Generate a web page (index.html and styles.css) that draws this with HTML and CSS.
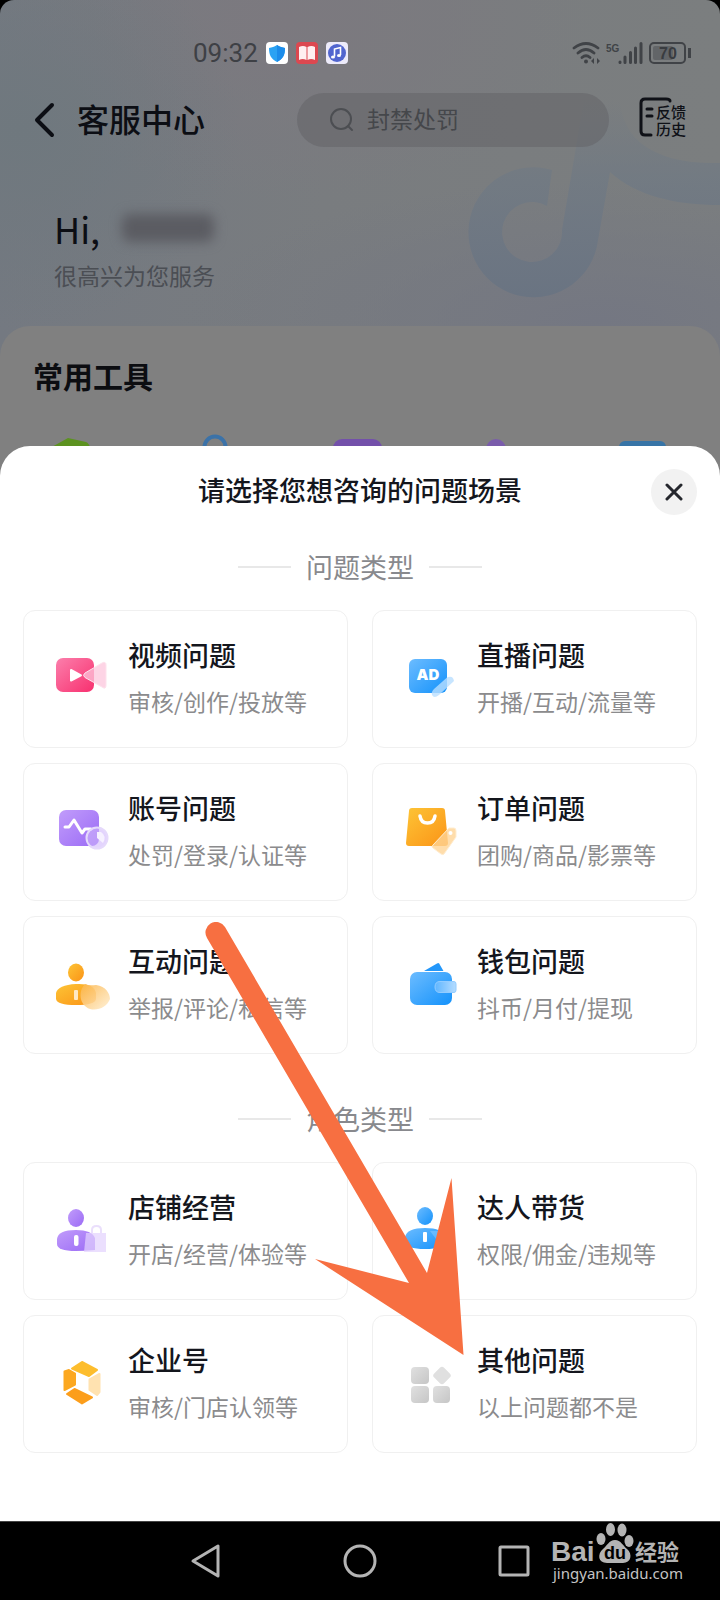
FILE: index.html
```html
<!DOCTYPE html>
<html lang="zh-CN">
<head>
<meta charset="utf-8">
<meta name="viewport" content="width=device-width, initial-scale=1">
<title>客服中心</title>
<link rel="stylesheet" href="styles.css">
</head>
<body>
<svg class="defs" width="0" height="0" aria-hidden="true">
  <defs>
    <linearGradient id="pink" x1="0" y1="0" x2="1" y2="1"><stop offset="0" stop-color="#fb7fac"/><stop offset="1" stop-color="#f8306f"/></linearGradient>
    <linearGradient id="violet" x1="0" y1="0" x2="1" y2="1"><stop offset="0" stop-color="#c19cfb"/><stop offset="1" stop-color="#9b6bf5"/></linearGradient>
    <linearGradient id="blue" x1="0" y1="0" x2="1" y2="1"><stop offset="0" stop-color="#6cbcff"/><stop offset="1" stop-color="#1492fb"/></linearGradient>
    <linearGradient id="amber" x1="0" y1="0" x2="1" y2="1"><stop offset="0" stop-color="#fdc436"/><stop offset="1" stop-color="#fb9316"/></linearGradient>
    <linearGradient id="grey" x1="0" y1="0" x2="1" y2="1"><stop offset="0" stop-color="#e0e0e0"/><stop offset="1" stop-color="#c6c6c6"/></linearGradient>
    <linearGradient id="cream" x1="0" y1="0" x2="1" y2="1"><stop offset="0" stop-color="#fcb548"/><stop offset="1" stop-color="#ffefd2"/></linearGradient>
    <linearGradient id="sky" x1="0" y1="0" x2="1" y2="0"><stop offset="0" stop-color="#5fb6ff"/><stop offset="1" stop-color="#b5dcff"/></linearGradient>
  </defs>
</svg>
<div class="phone">
  <div class="backdrop">
    <svg class="note" viewBox="0 0 264 200" aria-hidden="true">
      <defs><linearGradient id="noteFill" x1="0" y1="0" x2="0" y2="1"><stop offset="0" stop-color="#6f7984" stop-opacity="0"/><stop offset=".4" stop-color="#6f7984" stop-opacity=".7"/><stop offset="1" stop-color="#6a7482"/></linearGradient></defs>
      <path fill="url(#noteFill)" d="M96 70L91 106A30 30 0 1 0 106 130L128 0H164C166 40 200 65 264 63V105C220 105 180 96 154 72L142 140A65 65 0 1 1 96 70Z"/>
    </svg>
    <div class="status">
      <span class="clock">09:32</span>
      <span class="apps" aria-hidden="true">
        <svg width="22" height="22" viewBox="0 0 22 22"><rect width="22" height="22" rx="4" fill="#fff"/><path d="M11 3c3 2 5 2 8 3 0 7-2 11-8 14C5 17 3 13 3 6c3-1 5-1 8-3z" fill="#2ba2f3"/><path d="M11 3c3 2 5 2 8 3 0 7-2 11-8 14z" fill="#1c8cea"/></svg>
        <svg width="22" height="22" viewBox="0 0 22 22"><rect width="22" height="22" rx="4" fill="#dc4850"/><path d="M3 5q4-2 7.500 0v13q-4-2-7.500 0zM11.500 5q4-2 7.500 0v13q-4-2-7.500 0z" fill="#ffeff0"/></svg>
        <svg width="22" height="22" viewBox="0 0 22 22"><rect width="22" height="22" rx="4" fill="#edebfa"/><circle cx="11" cy="11" r="9" fill="#5165cf"/><path d="M8.500 14.500V7l6-1.500V13" fill="none" stroke="#fff" stroke-width="1.600"/><ellipse cx="7" cy="15" rx="2" ry="1.600" fill="#fff"/><ellipse cx="13" cy="13.500" rx="2" ry="1.600" fill="#fff"/></svg>
      </span>
      <svg class="signal" width="120" height="24" viewBox="0 0 120 24" aria-hidden="true">
        <g fill="none" stroke="#404347" stroke-width="2.800" stroke-linecap="round"><path d="M2 7Q14-2 26 7M6 12Q14 5 22 12M10 16.500Q14 13 18 16.500"/></g>
        <circle cx="14" cy="20.500" r="2" fill="#404347"/>
        <path d="M19 20l3-3v6zM28 20l-3-3v6z" fill="#404347"/>
        <text class="net" x="34" y="11">5G</text>
        <g stroke="#404347" stroke-width="3" stroke-linecap="round"><path d="M48 21V21.500M53 16V21.500M58.500 11.500V21.500M63.500 7V21.500M69 2.500V21.500"/></g>
        <rect x="78" y="2" width="35" height="20" rx="4" fill="none" stroke="#404347" stroke-width="2"/>
        <rect x="81" y="5" width="20" height="14" rx="2" fill="#626568"/>
        <path d="M117.500 7V17" stroke="#404347" stroke-width="3"/>
        <text class="level" x="96" y="18" text-anchor="middle">70</text>
      </svg>
    </div>
    <header class="top">
      <button class="back" type="button" aria-label="返回"><svg width="22" height="36" viewBox="0 0 22 36"><path d="M19 3L4 18L19 33" fill="none" stroke="#0c0e14" stroke-width="4" stroke-linecap="round" stroke-linejoin="round"/></svg></button>
      <h1 class="name">客服中心</h1>
      <label class="search">
        <svg width="24" height="24" viewBox="0 0 24 24" aria-hidden="true"><circle cx="11" cy="11" r="10" fill="none" stroke="#4c4e52" stroke-width="2"/><path d="M18 18L22 22" stroke="#4c4e52" stroke-width="2" stroke-linecap="round"/></svg>
        <input type="search" placeholder="封禁处罚" aria-label="搜索">
      </label>
      <button class="history" type="button">
        <svg width="34" height="40" viewBox="0 0 34 40" aria-hidden="true"><path d="M31 4Q31 2 27 2H6Q2 2 2 6V34Q2 38 6 38H12M8 12H13M8 19H13" fill="none" stroke="#0f1117" stroke-width="3" stroke-linecap="round"/></svg>
        <span>反馈<br>历史</span>
      </button>
    </header>
    <section class="greeting">
      <p class="hello">Hi,<span class="masked"></span></p>
      <p class="welcome">很高兴为您服务</p>
    </section>
    <section class="tools">
      <h2>常用工具</h2>
      <div class="tool-icons" aria-hidden="true">
        <svg viewBox="0 0 52 50"><path d="M4 14L22 4L40 8Q46 10 46 30V50H4z" fill="#5c9220"/></svg>
        <svg viewBox="0 0 52 50"><circle cx="26" cy="13" r="10.500" fill="none" stroke="#3b72a8" stroke-width="4"/></svg>
        <svg viewBox="0 0 52 50"><rect x="2" y="5" width="49" height="44" rx="9" fill="#7350aa"/></svg>
        <svg viewBox="0 0 52 50"><circle cx="22" cy="15" r="10" fill="#7a5cab"/></svg>
        <svg viewBox="0 0 52 50"><rect x="3" y="7" width="47" height="40" rx="6" fill="#3774a6"/></svg>
      </div>
    </section>
  </div>

  <main class="sheet">
    <div class="sheet-head">
      <h2>请选择您想咨询的问题场景</h2>
      <button class="close" type="button" aria-label="关闭"><svg width="18" height="18" viewBox="0 0 18 18"><path d="M2 2L16 16M16 2L2 16" stroke="#25272d" stroke-width="3" stroke-linecap="round"/></svg></button>
    </div>

    <h3 class="group">问题类型</h3>
    <div class="cards">
      <button class="card" type="button">
        <svg viewBox="0 0 56 56"><rect x="2" y="11" width="38" height="34" rx="7" fill="url(#pink)"/><path d="M17 23V33.500L27 28.300z" fill="#fff" stroke="#fff" stroke-width="2" stroke-linejoin="round"/><path d="M31 26L48 16Q52 14 52 18V38Q52 43 48 40L31 30.500Q28 28.300 31 26z" fill="#fcc6dc" fill-opacity=".75" stroke="#fde2ec"/></svg>
        <span class="copy"><b>视频问题</b><small>审核/创作/投放等</small></span>
      </button>
      <button class="card" type="button">
        <svg viewBox="0 0 56 56"><rect x="6" y="12" width="38" height="34" rx="6" fill="url(#blue)"/><text class="ad" x="25" y="33" text-anchor="middle">AD</text><path d="M29 48Q28 45 31 42L44 30.500Q50 28 51 34L36 48Q31 52 29 48z" fill="#b9deff" fill-opacity=".8"/></svg>
        <span class="copy"><b>直播问题</b><small>开播/互动/流量等</small></span>
      </button>
      <button class="card" type="button">
        <svg viewBox="0 0 56 56"><rect x="5" y="10" width="40" height="36" rx="7" fill="url(#violet)"/><path d="M11 27H15L20 20L28 33L31 29H37" fill="none" stroke="#fff" stroke-width="3" stroke-linecap="round" stroke-linejoin="round"/><circle cx="43" cy="38" r="10.500" fill="#d0b8fb" fill-opacity=".6" stroke="#e5d9fb" stroke-width="2"/><path d="M43 32V38L49 43Q53 36 47 32z" fill="#f6f1ff"/></svg>
        <span class="copy"><b>账号问题</b><small>处罚/登录/认证等</small></span>
      </button>
      <button class="card" type="button">
        <svg viewBox="0 0 56 56"><path d="M9 8H39Q42 8 42 11L45 43Q45 46 42 46H6Q3 46 3 43L6 11Q6 8 9 8z" fill="url(#amber)"/><path d="M17 16Q18 23 24.500 23T32 16" fill="none" stroke="#fff" stroke-width="3.500" stroke-linecap="round"/><path d="M46 28L51 28Q53 28 53 31V37L41 54Q40 55 38 54L30 48Q28 47 30 45z" fill="#ffd596" fill-opacity=".8" stroke="#ffedd0"/><circle cx="47.500" cy="33" r="2" fill="#fff"/></svg>
        <span class="copy"><b>订单问题</b><small>团购/商品/影票等</small></span>
      </button>
      <button class="card" type="button">
        <svg viewBox="0 0 56 56"><ellipse cx="22" cy="19.500" rx="8" ry="9" fill="url(#amber)"/><path d="M2 46V40Q4 32 22 31T42 40V46Q41 52 22 52T2 46z" fill="url(#amber)"/><rect x="20" y="37" width="4" height="10" rx="1" fill="#ffe8c4"/><path d="M31 31Q35 33 42 32C52 33 56 41 56 46C53 54 44 58 36 56C25 52 24 38 31 31z" fill="url(#cream)" fill-opacity=".88"/></svg>
        <span class="copy"><b>互动问题</b><small>举报/评论/私信等</small></span>
      </button>
      <button class="card" type="button">
        <svg viewBox="0 0 56 56"><path d="M21 18L34 10.500Q36 9 37 12L40.500 18z" fill="#2397fa"/><rect x="7" y="19" width="42" height="33" rx="7" fill="url(#blue)"/><path d="M51 28.500H37Q32 28.500 32 34T37 39.500H51Q53 39.500 53 37V31Q53 28.500 51 28.500z" fill="url(#sky)" stroke="#93ccff"/></svg>
        <span class="copy"><b>钱包问题</b><small>抖币/月付/提现</small></span>
      </button>
    </div>

    <h3 class="group group-next">角色类型</h3>
    <div class="cards">
      <button class="card" type="button">
        <svg viewBox="0 0 56 56"><ellipse cx="22" cy="19" rx="8" ry="9" fill="url(#violet)"/><path d="M3 45V40Q4 31 22 31Q38 31 41 39V51Q30 52 22 52Q3 52 3 45z" fill="url(#violet)"/><rect x="20" y="36" width="4.500" height="11" rx="2" fill="#fff"/><path d="M38 34V31Q38 27 42.500 27T47 31V34" fill="none" stroke="#eadffc" stroke-width="2"/><path d="M32 34H52V53H30z" fill="#e3d3fd" fill-opacity=".72"/></svg>
        <span class="copy"><b>店铺经营</b><small>开店/经营/体验等</small></span>
      </button>
      <button class="card" type="button">
        <svg viewBox="0 0 56 56"><ellipse cx="22" cy="17" rx="8" ry="9" fill="url(#blue)"/><path d="M2 43V38Q4 29 22 29T42 38V43Q41 50 22 50T2 43z" fill="url(#blue)"/><rect x="20" y="33" width="4" height="10" rx="1" fill="#fff"/><path d="M27 32H45V44H36Z" fill="#8ecbff" fill-opacity=".5"/></svg>
        <span class="copy"><b>达人带货</b><small>权限/佣金/违规等</small></span>
      </button>
      <button class="card" type="button">
        <svg viewBox="0 0 56 56"><g stroke-width="2" stroke-linejoin="round"><path d="M18 16.500L28 10L43 18L35 24z" fill="#fdbd2d" stroke="#fdbd2d"/><path d="M10.500 19.500L15 18L21 21.500V32.500L10.500 38z" fill="#fca820" stroke="#fca820"/><path d="M13 42L20.500 37L38 45.500L28 51.500z" fill="#fc9e1b" stroke="#fc9e1b"/><path d="M35.500 27.500L45.500 22V40L43 43L35.500 38z" fill="#ffe2b0" stroke="#ffe2b0"/></g></svg>
        <span class="copy"><b>企业号</b><small>审核/门店认领等</small></span>
      </button>
      <button class="card" type="button">
        <svg viewBox="0 0 56 56"><rect x="8" y="15" width="18" height="17" rx="4" fill="url(#grey)"/><rect x="8" y="34" width="18" height="17" rx="4" fill="url(#grey)"/><rect x="30" y="34" width="17" height="17" rx="4" fill="url(#grey)"/><rect x="32" y="16.500" width="14" height="14" rx="3" fill="#e0e0e0" transform="rotate(45 39 23.500)"/></svg>
        <span class="copy"><b>其他问题</b><small>以上问题都不是</small></span>
      </button>
    </div>
    <svg class="pointer" width="260" height="434" viewBox="0 0 260 434" aria-hidden="true"><path d="M20 5L222 351L246.500 256L258.500 433L110 337L204 361L2 16A10.300 10.300 0 0 1 20 5z" fill="#f76f41"/></svg>
  </main>

  <nav class="keys" aria-label="系统导航">
    <button type="button" aria-label="返回"><svg width="34" height="36" viewBox="0 0 34 36"><path d="M4 18L29 3V33z" fill="none" stroke="#b4b4b4" stroke-width="3" stroke-linejoin="round"/></svg></button>
    <button type="button" aria-label="主页"><svg width="34" height="36" viewBox="0 0 34 36"><circle cx="17" cy="18" r="15" fill="none" stroke="#b4b4b4" stroke-width="3"/></svg></button>
    <button type="button" aria-label="最近任务"><svg width="34" height="36" viewBox="0 0 34 36"><rect x="3" y="4" width="28" height="28" rx="1" fill="none" stroke="#b4b4b4" stroke-width="3"/></svg></button>
    <div class="mark">
      <svg width="128" height="42" viewBox="0 0 128 42" role="img" aria-label="Bai du 经验">
        <text class="mark-latin" x="-2" y="38">Bai</text>
        <g fill="#b4b4b4"><ellipse cx="48" cy="16" rx="4.500" ry="6"/><ellipse cx="57.500" cy="6.500" rx="4.500" ry="6.500"/><ellipse cx="69" cy="7" rx="4.500" ry="6.500"/><ellipse cx="76" cy="18" rx="4.500" ry="6"/><path d="M62 17C68 17 70 23 74 26C80 31 78 40 70 40H54C45 40 44 31 50 26C54 23 56 17 62 17z"/></g>
        <text class="mark-du" x="62" y="36" text-anchor="middle">du</text>
        <text class="mark-han" x="82" y="37">经验</text>
      </svg>
      <span class="mark-url">jingyan.baidu.com</span>
    </div>
  </nav>
</div>
</body>
</html>
```
FILE: styles.css
```css
* { box-sizing: border-box; }

body {
  margin: 0;
  background: #000;
  font-family: "Noto Sans CJK SC", "Noto Sans", sans-serif;
  color: #14161d;
}

h1, h2, h3, p { margin: 0; }

button {
  margin: 0;
  padding: 0;
  border: 0;
  background: none;
  font: inherit;
  color: inherit;
  text-align: left;
}

svg { display: block; flex: none; }
.defs { position: absolute; }

.phone {
  min-height: 100vh;
  display: flex;
  flex-direction: column;
}

/* Dimmed page behind the sheet */
.backdrop {
  position: relative;
  padding-top: 40px;
  border-radius: 14px 14px 0 0;
  background:
    radial-gradient(ellipse 220px 200px at 20px 130px, #6f787e, transparent),
    radial-gradient(ellipse 300px 180px at 290px 20px, #7c797f, transparent),
    radial-gradient(ellipse 420px 140px at 600px 320px, #747782, transparent),
    linear-gradient(90deg, #747981, #797c7f 45%, #7b7e7f);
}

.note {
  position: absolute;
  top: 100px;
  right: 0;
  width: 264px;
}

.status, .top, .greeting, .tools { position: relative; }

.status {
  display: flex;
  align-items: center;
  height: 26px;
  padding: 0 28px 0 193px;
}

.clock {
  font: 400 26px/26px Roboto, sans-serif;
  color: #3e4045;
}

.apps { display: flex; gap: 8px; margin-left: 8px; }
.signal { margin-left: auto; }
.net { font: bold 10px "Liberation Sans", sans-serif; fill: #404347; }
.level { font: bold 16px "Liberation Sans", sans-serif; fill: #393c40; }

.top {
  display: flex;
  align-items: center;
  height: 54px;
  margin-top: 27px;
  padding: 0 34px 0 33px;
}

.name {
  margin-left: 22px;
  padding-bottom: 4px;
  font-size: 32px;
  line-height: 44px;
  font-weight: 500;
  color: #0c0e14;
}

.search {
  flex: 1;
  min-width: 0;
  display: flex;
  align-items: center;
  gap: 13px;
  height: 54px;
  margin: 0 30px 0 92px;
  padding: 0 33px;
  border-radius: 27px;
  background: rgba(98, 97, 102, .5);
}

.search input {
  flex: 1;
  min-width: 0;
  padding: 0 0 4px;
  border: 0;
  outline: 0;
  background: none;
  font: inherit;
  font-size: 23px;
  line-height: 32px;
}

.search input::placeholder { color: #45474b; opacity: 1; }

.history {
  position: relative;
  width: 47px;
  height: 40px;
  margin-bottom: 6px;
  color: #0f1117;
}

.history span {
  position: absolute;
  right: 0;
  bottom: 0;
  font-size: 15px;
  line-height: 17px;
  font-weight: 500;
}

.greeting { padding: 55px 54px 35px; }

.hello {
  display: flex;
  align-items: center;
  font-size: 36px;
  line-height: 52px;
  color: #0c0e14;
}

.masked {
  width: 92px;
  height: 28px;
  margin-left: 22px;
  border-radius: 8px;
  background: #5b5c62;
  filter: blur(6px);
}

.welcome {
  margin-top: 5px;
  font-size: 23px;
  line-height: 32px;
  color: #4b4e54;
}

.tools {
  padding: 29px 32px 0 33px;
  border-radius: 30px 30px 0 0;
  background: #808080;
}

.tools h2 {
  font-size: 30px;
  line-height: 40px;
  font-weight: 700;
  color: #0c0d11;
}

.tool-icons {
  display: flex;
  justify-content: space-between;
  margin-top: 39px;
  padding: 0 20px 0 13px;
}

.tool-icons svg { width: 52px; height: 50px; }

/* Bottom sheet */
.sheet {
  position: relative;
  flex: 1;
  margin-top: -38px;
  padding: 23px 23px 68px;
  border-radius: 30px 30px 0 0;
  background: #fff;
}

.sheet-head {
  display: grid;
  grid-template-columns: 46px 1fr 46px;
  align-items: center;
}

.sheet-head h2 {
  grid-column: 2;
  padding-bottom: 4px;
  font-size: 27px;
  line-height: 40px;
  font-weight: 500;
  text-align: center;
}

.close {
  display: grid;
  place-items: center;
  width: 46px;
  height: 46px;
  border-radius: 50%;
  background: #f2f2f2;
}

.group {
  display: flex;
  justify-content: center;
  align-items: center;
  gap: 15px;
  margin: 32px 0 23px;
  font-size: 27px;
  line-height: 40px;
  font-weight: 400;
  color: #88898d;
}

.group::before, .group::after {
  content: "";
  width: 53px;
  height: 2px;
  background: #e8e8e8;
}

.group-next { margin-top: 45px; }

.cards {
  display: grid;
  grid-template-columns: 1fr 1fr;
  gap: 15px 24px;
}

.card {
  display: flex;
  align-items: flex-start;
  gap: 18px;
  padding: 24px 8px 30px 30px;
  border: 1px solid #f0f0f0;
  border-radius: 12px;
}

.card > svg { width: 56px; height: 56px; margin-top: 12px; overflow: visible; }
.copy { display: flex; flex-direction: column; gap: 10px; white-space: nowrap; }
.copy b { font-size: 27px; line-height: 40px; font-weight: 500; }
.copy small { font-size: 23px; line-height: 32px; color: #8b8b8d; }
.ad { font: 900 15px Inter, sans-serif; fill: #fff; }

/* Annotation arrow over the cards */
.pointer {
  position: absolute;
  top: 476px;
  left: 205px;
  pointer-events: none;
}

/* System navigation */
.keys {
  display: flex;
  align-items: center;
  height: 79px;
  padding: 0 39px 0 189px;
  border-top: 1px solid #444;
  background: #000;
}

.keys button + button { margin-left: 120px; }

.mark {
  align-self: flex-start;
  width: 128px;
  margin-left: auto;
  padding-top: 1px;
  color: #c4c4c4;
}

.mark svg { overflow: visible; }
.mark-latin { font: bold 28px "Liberation Sans", sans-serif; fill: #b4b4b4; }
.mark-du { font: bold 18px "Liberation Sans", sans-serif; fill: #000; }
.mark-han { font: bold 22px "Noto Sans CJK SC", sans-serif; fill: #b4b4b4; }
.mark-url { display: block; font: 15px/17px "Noto Sans", sans-serif; white-space: nowrap; }
```
